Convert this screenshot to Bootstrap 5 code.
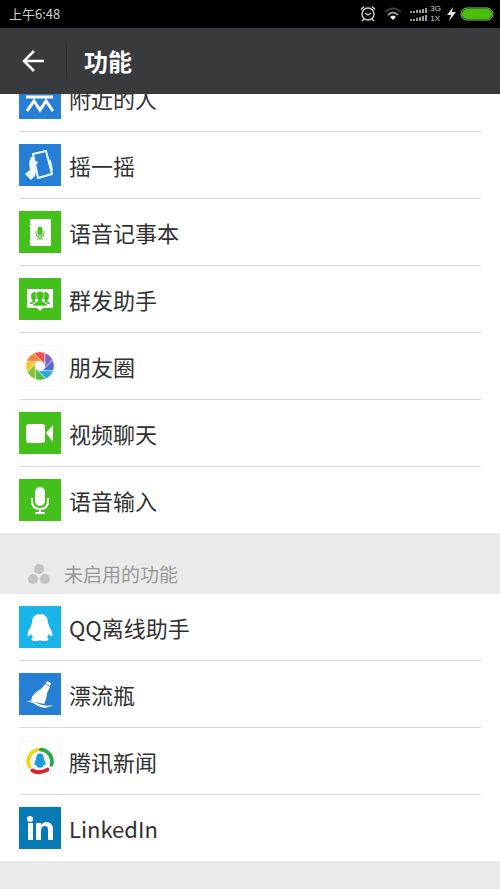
<!DOCTYPE html>
<html lang="zh-CN">
<head>
<meta charset="utf-8">
<meta name="viewport" content="width=device-width, initial-scale=1">
<title>功能</title>
<link href="https://cdn.jsdelivr.net/npm/bootstrap@5.3.0/dist/css/bootstrap.min.css" rel="stylesheet">
<style>
body { background: #eaeaea; color: #303030; font-family: "Noto Sans CJK SC", sans-serif; overflow-x: hidden; }
.statusbar { background: #000; color: #d0d0d0; height: 28px; padding: 0 6px 0 9px; font-size: 13px; line-height: 28px; }
.network { font-family: "Liberation Sans", sans-serif; font-size: 8px; line-height: 10px; margin: 0 6px 0 2px; }
.titlebar { background: #393a3e; height: 66px; padding-left: 20px; }
.titlebar h1 { font-size: 24px; line-height: 32px; padding-left: 17px; }
.back { width: 28px; height: 32px; }
.split { width: 1px; height: 36px; margin-left: 18px; background: #2c2d30; }
.scrolled { margin-top: -29px; }
.features { background: #fff; padding: 0 19px; }
.features a { height: 67px; gap: 8px; border-bottom: 1px solid #dadada; color: inherit; font-size: 22px; line-height: 32px; }
.features li:last-child a { height: 66px; border-bottom: 0; }
.features svg { width: 42px; height: 42px; flex: none; }
.blue { background: #267fd4; }
.green { background: #43c01a; }
.plain { background: #fff; border: 1px solid #f6f6f6; }
.cyan { background: #18b4ea; }
.linked { background: #067ab5; }
.section-title { height: 61px; padding: 20px 27px 0; gap: 13px; color: #999; font-size: 19px; line-height: 42px; font-weight: 400; }
</style>
<script src="https://cdn.jsdelivr.net/npm/bootstrap@5.3.0/dist/js/bootstrap.bundle.min.js"></script>
</head>
<body>
<header class="sticky-top">
  <div class="statusbar d-flex align-items-center justify-content-between">
    <span>上午6:48</span>
    <div class="d-flex align-items-center">
      <svg class="me-2" width="16" height="18" viewBox="0 0 16 18" fill="none" stroke="#d0d0d0" stroke-width="1.4" aria-label="闹钟"><circle cx="8" cy="9" r="6"/><path d="M5 8l3 2 3-2M1 4.500l3-3M15 4.500l-3-3M4 14l-2 2M12 14l2 2"/></svg>
      <svg class="me-2" width="18" height="16" viewBox="0 0 18 16" fill="none" stroke-width="2" aria-label="无线网络"><path d="M1 6Q9-1 17 6" stroke="#3c3c3c"/><path d="M4 9Q9 4 14 9" stroke="#999"/><path d="M6 11Q9 8 12 11L9 14z" fill="#eee"/></svg>
      <svg width="18" height="15" viewBox="0 0 18 15" stroke="#d0d0d0" stroke-width="1.500" aria-label="信号"><path d="M1 4v2M4 4v2M7 3v3M10 3v3M13 2v4M16 1v5M1 12v2M4 12v2M7 11v3M10 10v4M13 9v5M16 8v6"/></svg>
      <span class="network d-flex flex-column"><span>3G</span><span>1X</span></span>
      <svg width="9" height="16" viewBox="0 0 9 16" aria-hidden="true"><path d="M6 1L0 9h4L2 15l7-9H5z" fill="#e6e6e6"/></svg>
      <svg class="ms-1" width="34" height="14" viewBox="0 0 34 14" aria-label="电量"><rect x="1" y="1" width="32" height="12" rx="6" fill="#111" stroke="#8ccf68"/><rect x="2" y="2" width="30" height="10" rx="5" fill="#49be0b"/></svg>
    </div>
  </div>
  <div class="titlebar d-flex align-items-center text-white">
    <button class="back btn p-0 border-0 d-flex align-items-center" type="button" aria-label="返回"><svg width="28" height="24" viewBox="0 0 28 24" fill="none" stroke="#fff" stroke-width="2.500"><path d="M14 2L4 12l10 10M4 12h20"/></svg></button>
    <span class="split"></span>
    <h1 class="m-0 fw-bold">功能</h1>
  </div>
</header>
<main class="scrolled">
  <ul class="features list-unstyled m-0">
    <li><a href="#" class="d-flex align-items-center text-decoration-none">
      <svg class="blue" viewBox="0 0 42 42" fill="none" stroke="#fff" stroke-width="3" aria-hidden="true"><circle cx="14" cy="10" r="3"/><circle cx="27" cy="10" r="3"/><path d="M7 20h27M8 34l7-10 6 9 6-9 7 10"/></svg>附近的人</a></li>
    <li><a href="#" class="d-flex align-items-center text-decoration-none">
      <svg class="blue" viewBox="0 0 42 42" fill="#f0fbff" aria-hidden="true"><path d="M14 10L27 7 33 30 19 34z" fill="none" stroke="#f0fbff" stroke-width="2" stroke-linejoin="round"/><path d="M11 15l2-3 3 5 3 1-1 2-2 1 1 6-1 5-4 4-6-6 5-4-1-6zM29 14l3 3 2 9-2 1z"/></svg>摇一摇</a></li>
    <li><a href="#" class="d-flex align-items-center text-decoration-none">
      <svg class="green" viewBox="0 0 42 42" aria-hidden="true"><path d="M11 8h21v27H11v-4l-1-1 2-1-1-1V16l-1-1 2-1-1-1z" fill="#fff"/><g fill="none" stroke="#43c01a"><rect x="19" y="16" width="4" height="8" rx="2" fill="#43c01a"/><path d="M17 20v2q0 4 4 4t4-4v-2M21 26v2M18 28h6"/></g></svg>语音记事本</a></li>
    <li><a href="#" class="d-flex align-items-center text-decoration-none">
      <svg class="green" viewBox="0 0 42 42" aria-hidden="true"><path d="M8 11h26v19H24l-3 3-3-3H8z" fill="#fff"/><g fill="#43c01a"><path d="M15 14q3 0 3 3t-2 5l1 1-4 3h-2q0-2 3-3-2-2-2-5t3-4zM27 14q-3 0-3 3t2 5l-1 1 4 3h2q0-2-3-3 2-2 2-5t-3-4z"/><path d="M21 13q4 0 4 4 0 3-2 5v1l5 3v2H14v-2l5-3v-1q-2-2-2-5 0-4 4-4z" stroke="#fff" stroke-width=".6"/></g></svg>群发助手</a></li>
    <li><a href="#" class="d-flex align-items-center text-decoration-none">
      <svg class="plain" viewBox="-21 -21 42 42" stroke="#fff" stroke-width=".5" aria-hidden="true"><defs><path id="blade" d="M5-14A15 15 0 0 1 13.400-6.400L5 2.070z"/></defs><use href="#blade" fill="#8264c8"/><use href="#blade" fill="#4f6bd5" transform="rotate(45)"/><use href="#blade" fill="#20a6e8" transform="rotate(90)"/><use href="#blade" fill="#54bd4c" transform="rotate(135)"/><use href="#blade" fill="#83c52d" transform="rotate(180)"/><use href="#blade" fill="#f6c735" transform="rotate(225)"/><use href="#blade" fill="#f48531" transform="rotate(270)"/><use href="#blade" fill="#ed5050" transform="rotate(315)"/></svg>朋友圈</a></li>
    <li><a href="#" class="d-flex align-items-center text-decoration-none">
      <svg class="green" viewBox="0 0 42 42" fill="#fff" aria-hidden="true"><rect x="7" y="12" width="19" height="19" rx="3"/><path d="M27 21l7-8v17z"/></svg>视频聊天</a></li>
    <li><a href="#" class="d-flex align-items-center text-decoration-none">
      <svg class="green" viewBox="0 0 42 42" fill="none" stroke="#fff" stroke-width="2" aria-hidden="true"><rect x="16" y="8" width="10" height="19" rx="5" fill="#fff" stroke="none"/><path d="M13 19v3q0 8 8 8t8-8v-3M21 30v4M16 34h10"/></svg>语音输入</a></li>
  </ul>
  <h2 class="section-title d-flex align-items-center m-0">
    <svg width="24" height="22" viewBox="0 0 24 22" fill="#c3c3c3" aria-hidden="true"><circle cx="12" cy="6" r="5"/><circle cx="6" cy="16" r="5"/><circle cx="18" cy="16" r="5"/></svg>未启用的功能</h2>
  <ul class="features list-unstyled m-0">
    <li><a href="#" class="d-flex align-items-center text-decoration-none">
      <svg class="cyan" viewBox="0 0 42 42" fill="#fff" aria-hidden="true"><path d="M21 8c-6 0-8 4-8 9l-2 5c-2 3-3 6-2 8q1 1 3-2l2 3c-3 2-1 4 2 4 3 0 4 0 5-1 1 1 2 1 5 1 3 0 5-2 2-4l2-3q2 3 3 2c1-2 0-5-2-8l-2-5c0-5-2-9-8-9z"/></svg>QQ离线助手</a></li>
    <li><a href="#" class="d-flex align-items-center text-decoration-none">
      <svg class="blue" viewBox="0 0 42 42" fill="#fff" aria-hidden="true"><path d="M28 8l4 2-1 3-4-2zM26 11l5 3-3 6q0 4-2 9l-1 2-13-3 1-4q3-5 9-8z"/><path d="M7 28q6-1 11 2 7 4 16 2-7 5-15 1-5-4-12-5z"/></svg>漂流瓶</a></li>
    <li><a href="#" class="d-flex align-items-center text-decoration-none">
      <svg class="plain" viewBox="0 0 42 42" fill="none" stroke-width="4" stroke-linecap="round" aria-hidden="true"><path d="M10 27A12.500 12.500 0 0 1 19 9" stroke="#f3d21b"/><path d="M22 9A12.500 12.500 0 0 1 33 25" stroke="#27a84b"/><path d="M13 31Q20 35 29 30" stroke="#d9232e"/><path d="M21 13q-4 0-4 5l-2 6q0 2 2 1 0 3 4 3t4-3q2 1 2-1l-2-6q0-5-4-5z" fill="#1e9be0"/></svg>腾讯新闻</a></li>
    <li><a href="#" class="d-flex align-items-center text-decoration-none">
      <svg class="linked" viewBox="0 0 42 42" fill="#fff" aria-hidden="true"><circle cx="11" cy="12" r="3"/><path d="M9 16h5v17H9zM17 16h5v2q2-3 5-3 7 0 7 8v10h-5V23q0-4-3-4-4 0-4 5v9h-5z"/></svg>LinkedIn</a></li>
  </ul>
</main>
</body>
</html>
